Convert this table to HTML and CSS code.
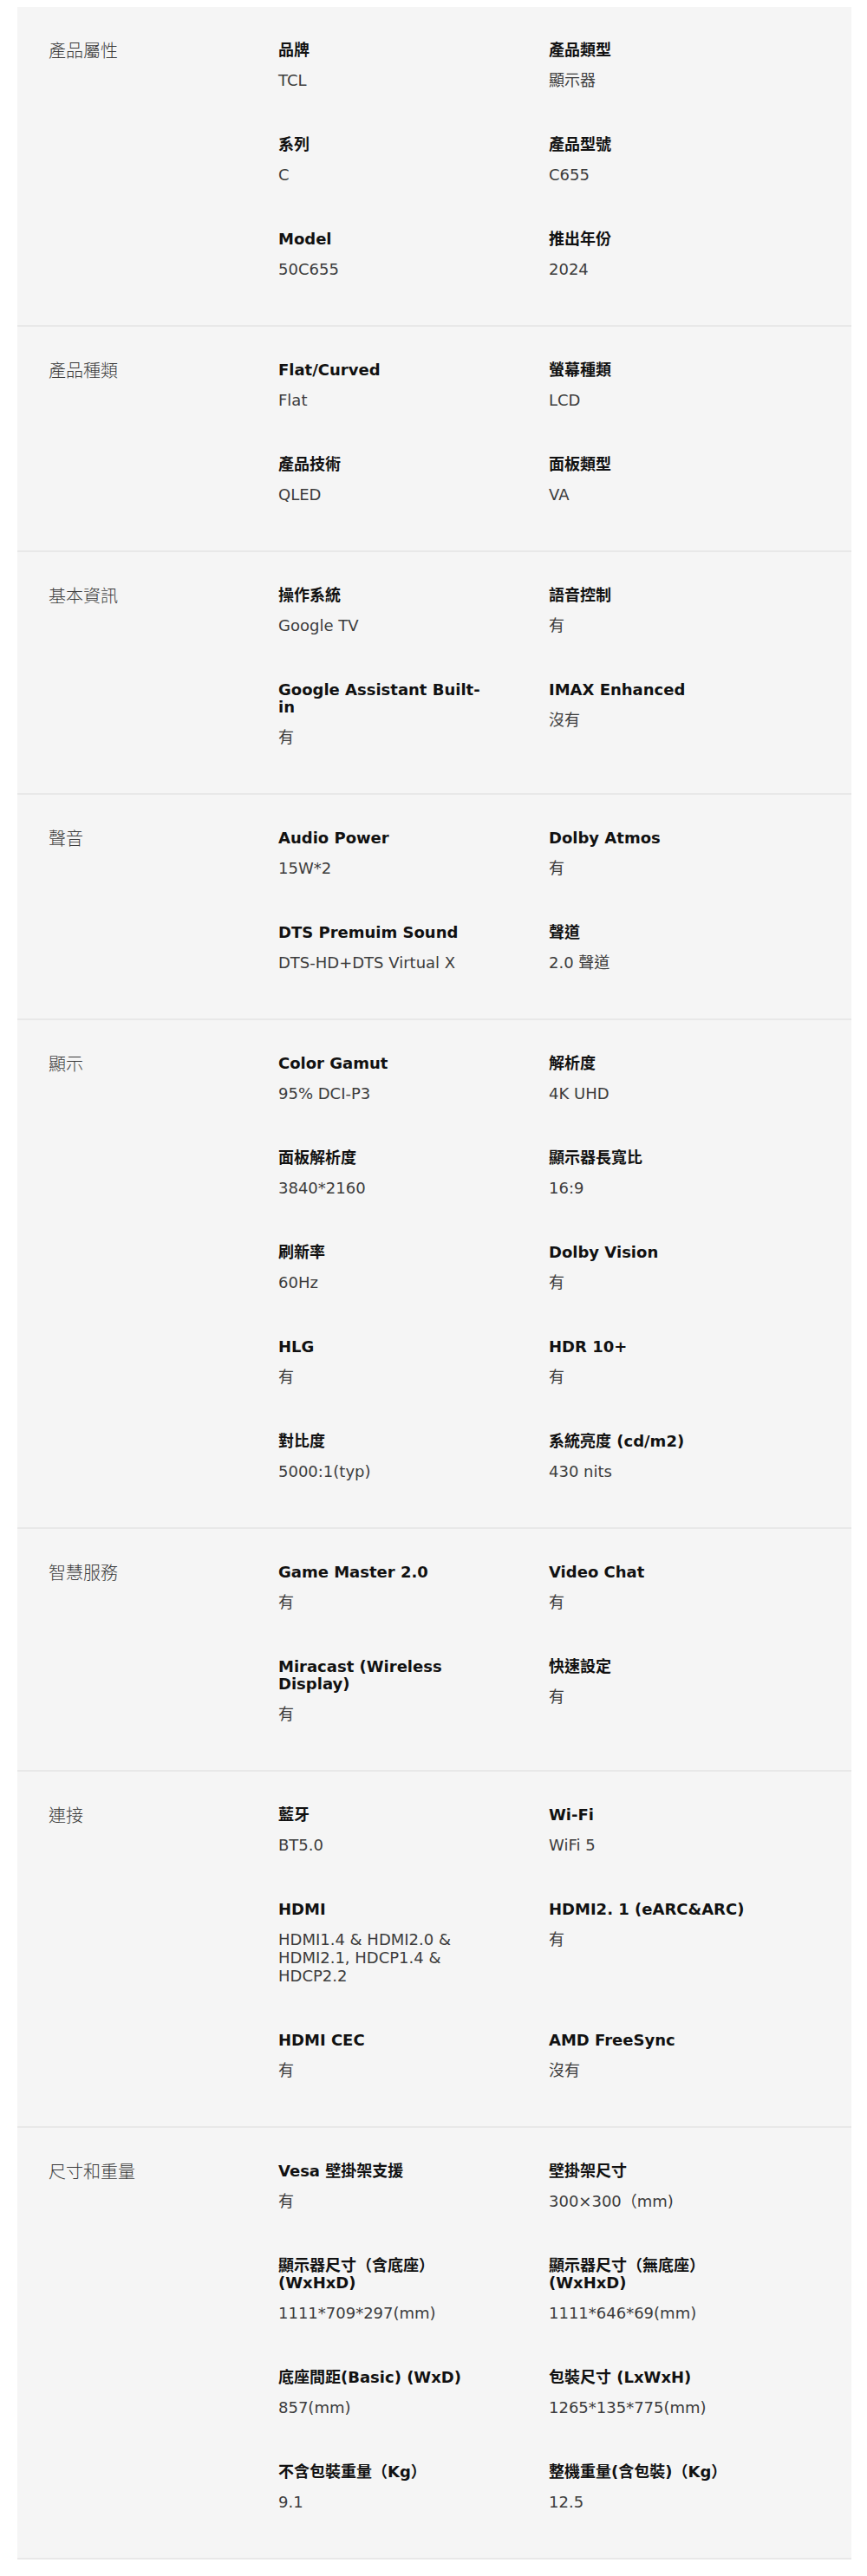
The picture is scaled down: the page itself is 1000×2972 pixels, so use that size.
FILE: index.html
```html
<!DOCTYPE html>
<html lang="zh-Hant">
<head>
<meta charset="utf-8">
<title>規格</title>
<link rel="stylesheet" href="styles.css">
</head>
<body>
<div class="specs">
  <section class="group">
    <h3 class="group-title">產品屬性</h3>
    <div class="items">
      <div class="item"><div class="k">品牌</div><div class="v">TCL</div></div>
      <div class="item"><div class="k">產品類型</div><div class="v">顯示器</div></div>
      <div class="item"><div class="k">系列</div><div class="v">C</div></div>
      <div class="item"><div class="k">產品型號</div><div class="v">C655</div></div>
      <div class="item"><div class="k">Model</div><div class="v">50C655</div></div>
      <div class="item"><div class="k">推出年份</div><div class="v">2024</div></div>
    </div>
  </section>
  <section class="group">
    <h3 class="group-title">產品種類</h3>
    <div class="items">
      <div class="item"><div class="k">Flat/Curved</div><div class="v">Flat</div></div>
      <div class="item"><div class="k">螢幕種類</div><div class="v">LCD</div></div>
      <div class="item"><div class="k">產品技術</div><div class="v">QLED</div></div>
      <div class="item"><div class="k">面板類型</div><div class="v">VA</div></div>
    </div>
  </section>
  <section class="group">
    <h3 class="group-title">基本資訊</h3>
    <div class="items">
      <div class="item"><div class="k">操作系統</div><div class="v">Google TV</div></div>
      <div class="item"><div class="k">語音控制</div><div class="v">有</div></div>
      <div class="item"><div class="k">Google Assistant Built-in</div><div class="v">有</div></div>
      <div class="item"><div class="k">IMAX Enhanced</div><div class="v">沒有</div></div>
    </div>
  </section>
  <section class="group">
    <h3 class="group-title">聲音</h3>
    <div class="items">
      <div class="item"><div class="k">Audio Power</div><div class="v">15W*2</div></div>
      <div class="item"><div class="k">Dolby Atmos</div><div class="v">有</div></div>
      <div class="item"><div class="k">DTS Premuim Sound</div><div class="v">DTS-HD+DTS Virtual X</div></div>
      <div class="item"><div class="k">聲道</div><div class="v">2.0 聲道</div></div>
    </div>
  </section>
  <section class="group">
    <h3 class="group-title">顯示</h3>
    <div class="items">
      <div class="item"><div class="k">Color Gamut</div><div class="v">95% DCI-P3</div></div>
      <div class="item"><div class="k">解析度</div><div class="v">4K UHD</div></div>
      <div class="item"><div class="k">面板解析度</div><div class="v">3840*2160</div></div>
      <div class="item"><div class="k">顯示器長寬比</div><div class="v">16:9</div></div>
      <div class="item"><div class="k">刷新率</div><div class="v">60Hz</div></div>
      <div class="item"><div class="k">Dolby Vision</div><div class="v">有</div></div>
      <div class="item"><div class="k">HLG</div><div class="v">有</div></div>
      <div class="item"><div class="k">HDR 10+</div><div class="v">有</div></div>
      <div class="item"><div class="k">對比度</div><div class="v">5000:1(typ)</div></div>
      <div class="item"><div class="k">系統亮度 (cd/m2)</div><div class="v">430 nits</div></div>
    </div>
  </section>
  <section class="group">
    <h3 class="group-title">智慧服務</h3>
    <div class="items">
      <div class="item"><div class="k">Game Master 2.0</div><div class="v">有</div></div>
      <div class="item"><div class="k">Video Chat</div><div class="v">有</div></div>
      <div class="item"><div class="k">Miracast (Wireless Display)</div><div class="v">有</div></div>
      <div class="item"><div class="k">快速設定</div><div class="v">有</div></div>
    </div>
  </section>
  <section class="group">
    <h3 class="group-title">連接</h3>
    <div class="items">
      <div class="item"><div class="k">藍牙</div><div class="v">BT5.0</div></div>
      <div class="item"><div class="k">Wi-Fi</div><div class="v">WiFi 5</div></div>
      <div class="item"><div class="k">HDMI</div><div class="v">HDMI1.4 &amp; HDMI2.0 &amp; HDMI2.1, HDCP1.4 &amp; HDCP2.2</div></div>
      <div class="item"><div class="k">HDMI2. 1 (eARC&amp;ARC)</div><div class="v">有</div></div>
      <div class="item"><div class="k">HDMI CEC</div><div class="v">有</div></div>
      <div class="item"><div class="k">AMD FreeSync</div><div class="v">沒有</div></div>
    </div>
  </section>
  <section class="group">
    <h3 class="group-title">尺寸和重量</h3>
    <div class="items">
      <div class="item"><div class="k">Vesa 壁掛架支援</div><div class="v">有</div></div>
      <div class="item"><div class="k">壁掛架尺寸</div><div class="v">300×300（mm)</div></div>
      <div class="item"><div class="k">顯示器尺寸（含底座） (WxHxD)</div><div class="v">1111*709*297(mm)</div></div>
      <div class="item"><div class="k">顯示器尺寸（無底座） (WxHxD)</div><div class="v">1111*646*69(mm)</div></div>
      <div class="item"><div class="k">底座間距(Basic) (WxD)</div><div class="v">857(mm)</div></div>
      <div class="item"><div class="k">包裝尺寸 (LxWxH)</div><div class="v">1265*135*775(mm)</div></div>
      <div class="item"><div class="k">不含包裝重量（Kg）</div><div class="v">9.1</div></div>
      <div class="item"><div class="k">整機重量(含包裝)（Kg）</div><div class="v">12.5</div></div>
    </div>
  </section>
</div>
</body>
</html>
```
FILE: styles.css
```css
html, body {
  margin: 0;
  padding: 0;
  background: #ffffff;
}

body {
  font-family: "DejaVu Sans", "Noto Sans CJK TC", sans-serif;
  color: #222;
}

.specs {
  margin: 8px 18px 0 20px;
  padding-bottom: 19px;
}

.group {
  display: grid;
  grid-template-columns: 265px 1fr;
  padding: 40px 0 54px 36px;
  background: #f5f5f5;
  border-bottom: 2px solid #e8e8e8;
}

.group-title {
  margin: 0;
  font-family: "Noto Sans CJK TC", sans-serif;
  font-size: 20px;
  line-height: 20px;
  font-weight: 300;
  color: #3a3a3a;
}

.items {
  display: grid;
  grid-template-columns: 312px 312px;
  row-gap: 54px;
  align-items: start;
}

.item {
  width: 240px;
  display: flex;
  flex-direction: column;
  gap: 14px;
}

.k {
  font-size: 18px;
  line-height: 20px;
  font-weight: 700;
  color: #111;
}

.v {
  font-size: 18px;
  line-height: 21px;
  font-weight: 400;
  color: #3c3c3c;
}
```
